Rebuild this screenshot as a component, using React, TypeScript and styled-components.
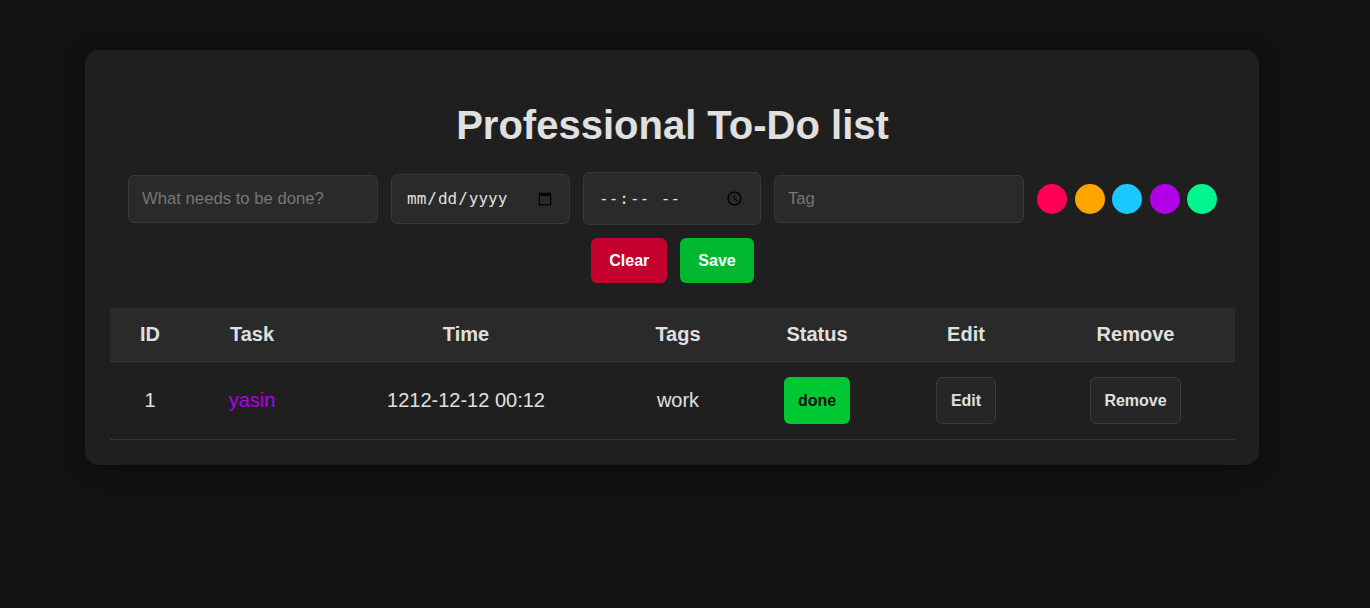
import { useState } from 'react';
import styled, { createGlobalStyle } from 'styled-components';

const GlobalStyle = createGlobalStyle`
  html, body {
    margin: 0;
    padding: 0;
    background: #121212;
    color: #e0e0e0;
    font-family: "Liberation Sans", Arial, sans-serif;
  }
`;

const colors = ['#ff0055', '#ffa500', '#1ac8ff', '#b000e8', '#00f58f'];

const tasks = [
  { id: 1, task: 'yasin', color: '#b000e8', time: '1212-12-12 00:12', tag: 'work', status: 'done' },
];

const App = () => {
  const [picked, setPicked] = useState(colors[3]);

  return (
    <>
      <GlobalStyle />
      <Page>
        <Card>
          <Title>Professional To-Do list</Title>

          <FormRow>
            <TextInput type="text" placeholder="What needs to be done?" $width={250} />
            <DateInput type="date" $width={179} />
            <DateInput type="time" $width={178} $tall />
            <TextInput type="text" placeholder="Tag" $width={250} />
            <Swatches>
              {colors.map((c) => (
                <Swatch key={c} $color={c} $active={picked === c} onClick={() => setPicked(c)} />
              ))}
            </Swatches>
          </FormRow>

          <ButtonRow>
            <ActionButton $bg="#c4002f">Clear</ActionButton>
            <ActionButton $bg="#00b830">Save</ActionButton>
          </ButtonRow>

          <Table>
            <colgroup>
              <col style={{ width: 80 }} />
              <col style={{ width: 124 }} />
              <col style={{ width: 304 }} />
              <col style={{ width: 120 }} />
              <col style={{ width: 158 }} />
              <col style={{ width: 140 }} />
              <col style={{ width: 199 }} />
            </colgroup>
            <thead>
              <tr>
                <Th>ID</Th>
                <Th>Task</Th>
                <Th>Time</Th>
                <Th>Tags</Th>
                <Th>Status</Th>
                <Th>Edit</Th>
                <Th>Remove</Th>
              </tr>
            </thead>
            <tbody>
              {tasks.map((t) => (
                <tr key={t.id}>
                  <Td>{t.id}</Td>
                  <Td style={{ color: t.color }}>{t.task}</Td>
                  <Td>{t.time}</Td>
                  <Td>{t.tag}</Td>
                  <Td>
                    <StatusButton>{t.status}</StatusButton>
                  </Td>
                  <Td>
                    <RowButton>Edit</RowButton>
                  </Td>
                  <Td>
                    <RowButton>Remove</RowButton>
                  </Td>
                </tr>
              ))}
            </tbody>
          </Table>
        </Card>
      </Page>
    </>
  );
};

export default App;

const Page = styled.div`
  min-height: 608px;
  padding-top: 50px;
  box-sizing: border-box;
`;

const Card = styled.div`
  width: 1174px;
  margin-left: 85px;
  box-sizing: border-box;
  padding: 52px 24px 25px 25px;
  background: #1f1f1f;
  border-radius: 14px;
  box-shadow: 0 4px 20px rgba(0, 0, 0, 0.4);
`;

const Title = styled.h1`
  margin: 0 0 24px;
  text-align: center;
  font-size: 40px;
  line-height: 46px;
  font-weight: 700;
  color: #e0e0e0;
`;

const FormRow = styled.div`
  display: flex;
  align-items: center;
  justify-content: center;
  gap: 13px;
  height: 53px;
`;

const baseInput = `
  box-sizing: border-box;
  background: #2a2a2a;
  border: 1px solid #383838;
  border-radius: 6px;
  color: #e0e0e0;
  font-size: 16px;
  outline: none;
`;

const TextInput = styled.input<{ $width: number }>`
  ${baseInput}
  width: ${(p) => p.$width}px;
  height: 48px;
  padding: 0 13px;
  font-family: "Liberation Sans", Arial, sans-serif;
  font-size: 16.7px;

  &::placeholder {
    color: #767676;
  }
`;

const DateInput = styled.input<{ $width: number; $tall?: boolean }>`
  ${baseInput}
  width: ${(p) => p.$width}px;
  height: ${(p) => (p.$tall ? 53 : 50)}px;
  padding: 0 14px;
  font-family: "DejaVu Sans Mono", monospace;
`;

const Swatches = styled.div`
  display: flex;
  gap: 7.5px;
`;

const Swatch = styled.button<{ $color: string; $active: boolean }>`
  width: 30px;
  height: 30px;
  padding: 0;
  border: none;
  border-radius: 50%;
  background: ${(p) => p.$color};
  cursor: pointer;
`;

const ButtonRow = styled.div`
  display: flex;
  justify-content: center;
  gap: 13px;
  margin: 13px 0 25px;
`;

const ActionButton = styled.button<{ $bg: string }>`
  height: 45px;
  padding: 0 18px;
  border: none;
  border-radius: 6px;
  background: ${(p) => p.$bg};
  color: #fff;
  font-family: "Liberation Sans", Arial, sans-serif;
  font-size: 16px;
  font-weight: 700;
  cursor: pointer;
`;

const Table = styled.table`
  width: 1125px;
  border-collapse: collapse;
  table-layout: fixed;
`;

const Th = styled.th`
  height: 53px;
  padding: 0;
  background: #2a2a2a;
  border-bottom: 1px solid #363636;
  color: #e0e0e0;
  font-size: 20px;
  font-weight: 700;
  text-align: center;
`;

const Td = styled.td`
  height: 77px;
  padding: 0;
  border-bottom: 1px solid #363636;
  color: #e0e0e0;
  font-size: 20px;
  text-align: center;
`;

const StatusButton = styled.button`
  height: 47px;
  padding: 0 14px;
  border: none;
  border-radius: 6px;
  background: #00c832;
  color: #111;
  font-family: "Liberation Sans", Arial, sans-serif;
  font-size: 16px;
  font-weight: 700;
  cursor: pointer;
`;

const RowButton = styled.button`
  height: 47px;
  padding: 0 13.5px;
  border: 1px solid #3a3a3a;
  border-radius: 6px;
  background: #262626;
  color: #e0e0e0;
  font-family: "Liberation Sans", Arial, sans-serif;
  font-size: 16px;
  font-weight: 700;
  cursor: pointer;
`;
